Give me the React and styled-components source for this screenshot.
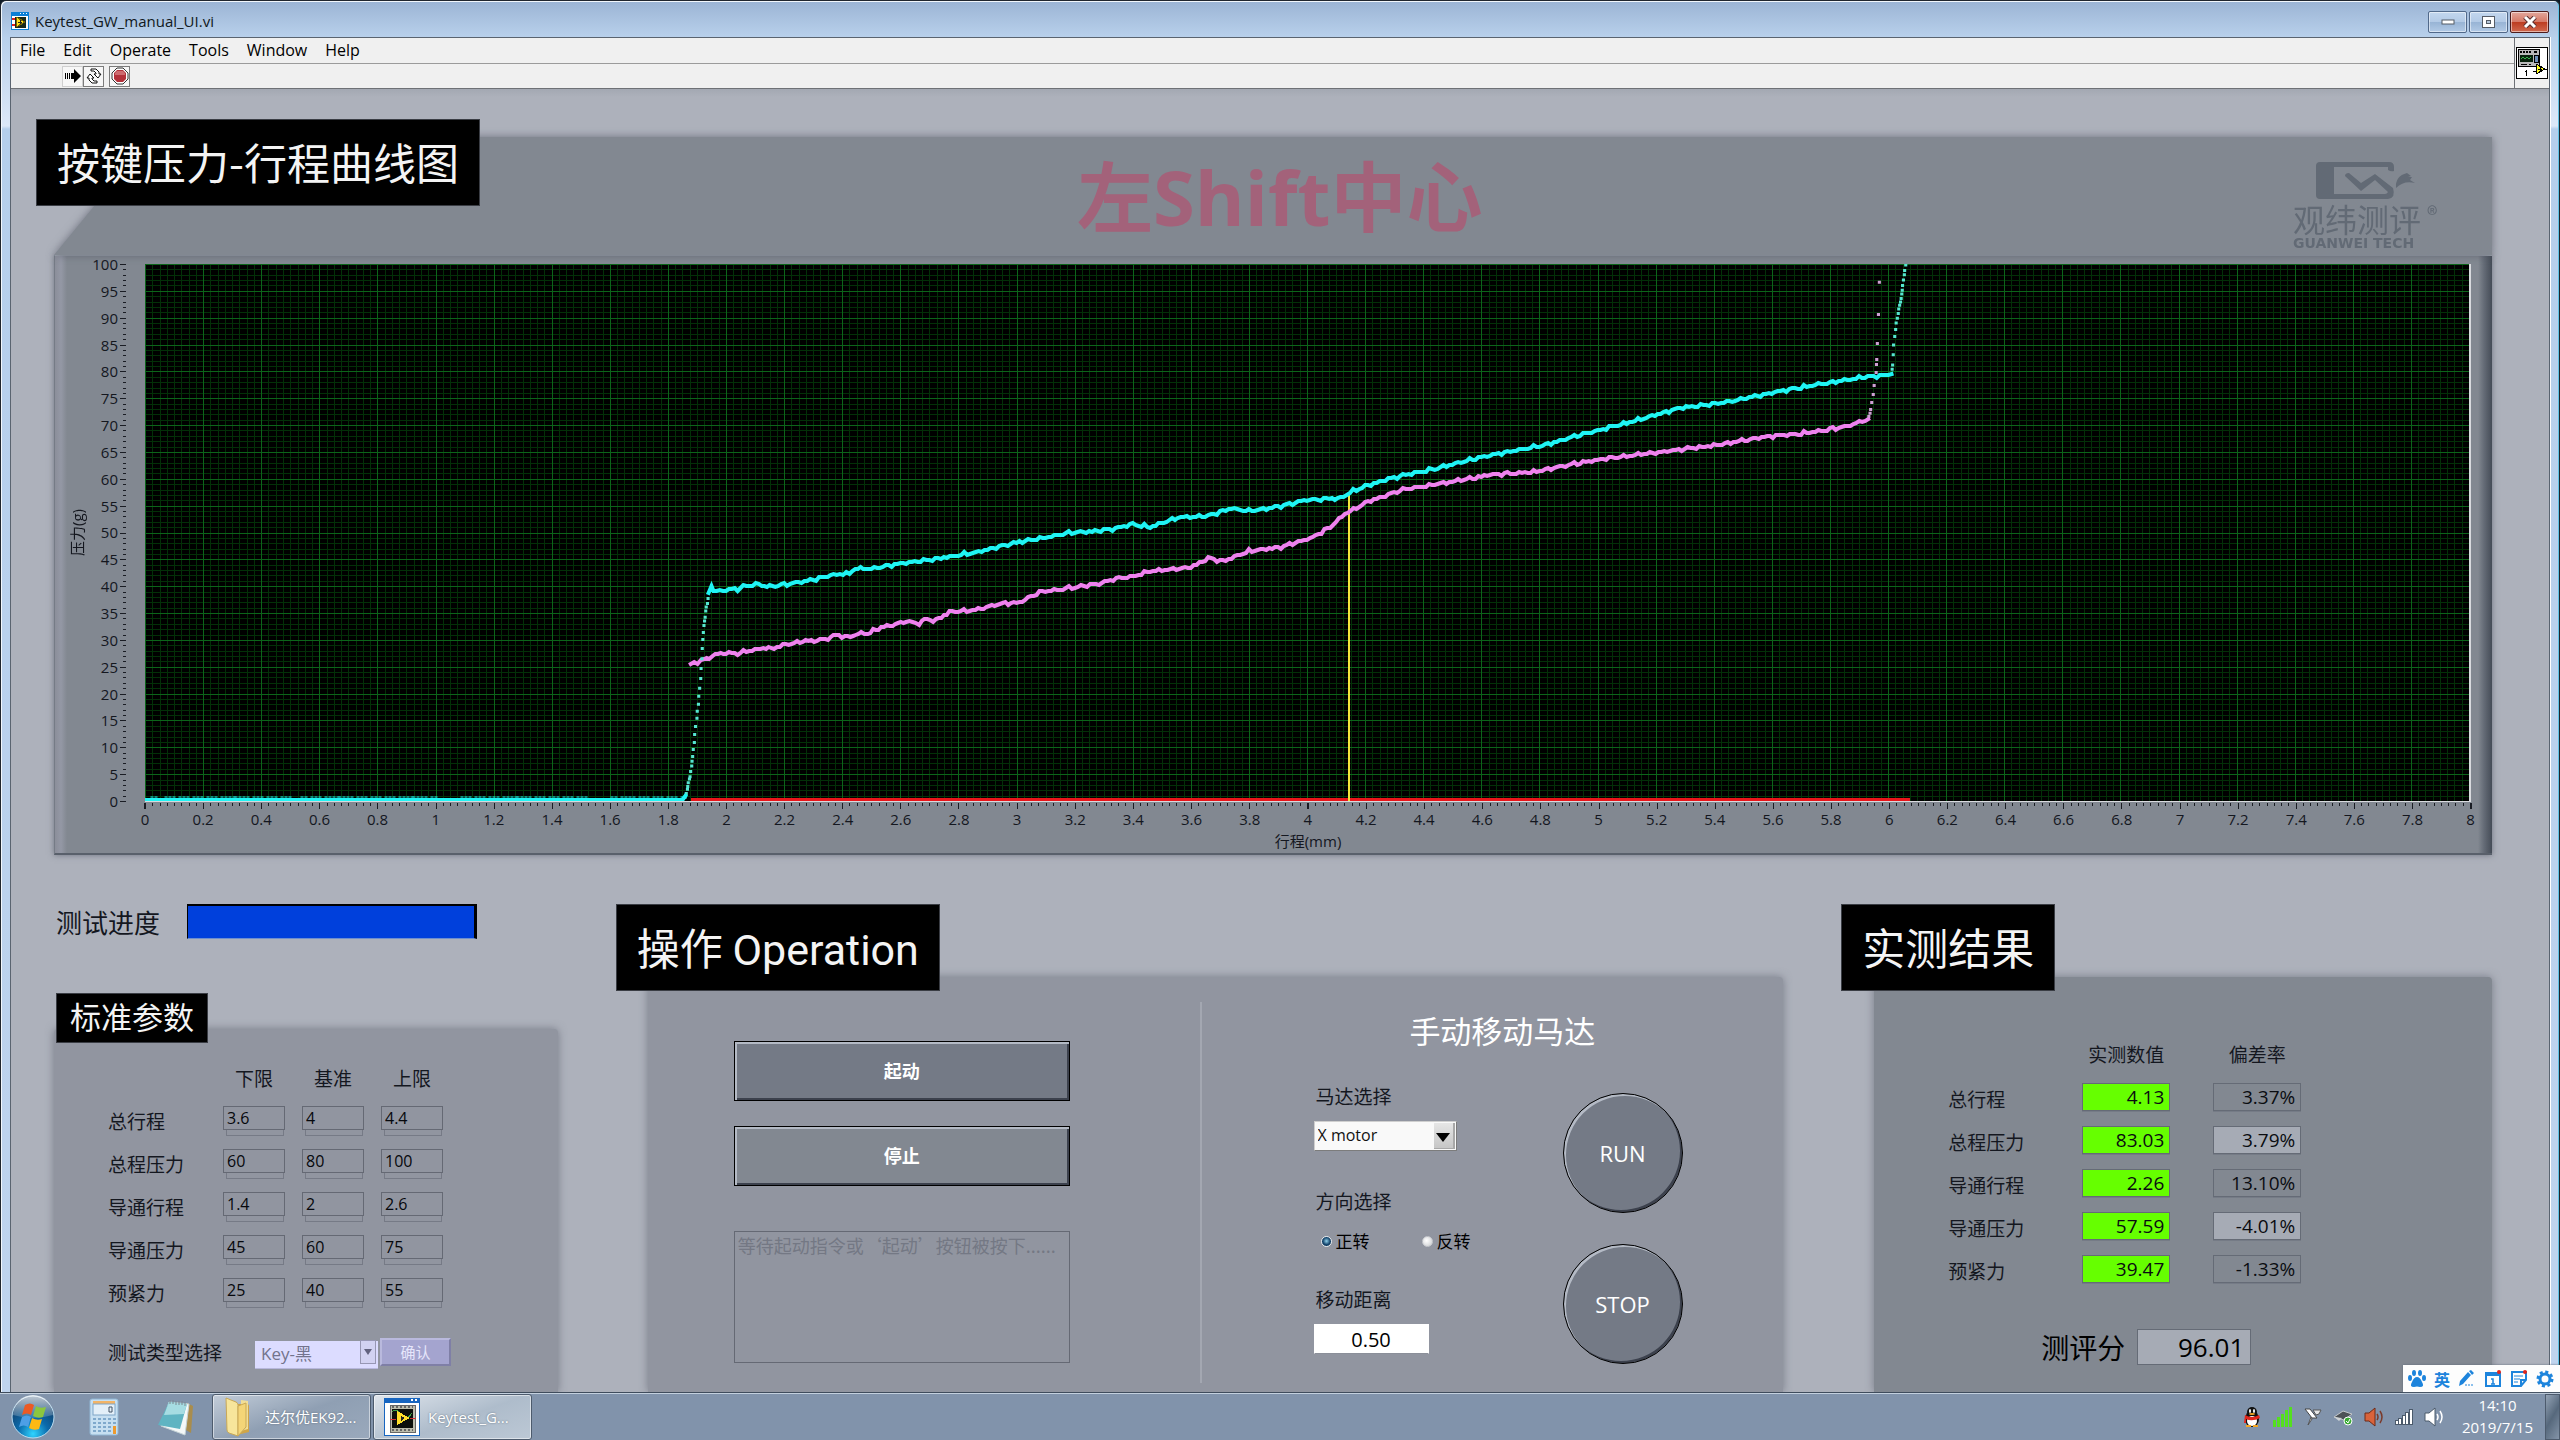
import React, { memo, useState } from 'react'
import styled, { createGlobalStyle, css } from 'styled-components'

const UI_FONT = `'Open Sans', 'Noto Sans CJK SC', sans-serif`
const CJK_FONT = `'Noto Sans CJK SC', 'Open Sans', sans-serif`

const PLOT_W = 2324
const PLOT_H = 537
const X_MAX = 8
const Y_MAX = 100

const range = n => Array.from({ length: n }, (_, i) => i)
const px = mm => Math.round((mm / X_MAX) * PLOT_W * 10) / 10
const py = g => Math.round((PLOT_H - (g / Y_MAX) * PLOT_H) * 10) / 10

// Press stroke, [mm, g]
const pressLine = [
	[1.94, 38.7], [1.95, 40.3], [1.957, 39], [2.0, 39.3], [2.04, 39.5], [2.08, 40.2], [2.114, 40.4],
	[2.15, 39.9], [2.21, 40.4], [2.3, 41.2], [2.37, 42.2], [2.425, 42.4], [2.445, 43.3], [2.5, 43.3],
	[2.61, 44.3], [2.7, 44.9], [2.85, 46.2], [2.98, 47.9], [3.18, 49.9], [3.32, 50.5], [3.4, 51.6],
	[3.46, 51], [3.555, 52.8], [3.66, 53.1], [3.74, 54.5], [3.8, 54], [3.91, 54.9], [3.99, 56],
	[4.115, 56.4], [4.17, 58], [4.27, 59.9], [4.44, 61.9], [4.61, 64.2], [4.81, 66.2], [4.95, 68.3],
	[5.12, 70.7], [5.285, 73.2], [5.425, 74.1], [5.59, 75.9], [5.76, 77.6], [5.9, 78.8], [6.012, 79.5],
]

const pressDots = [
	[1.859, 0.7], [1.863, 1.4], [1.867, 2.2], [1.868, 2.7], [1.87, 3.4], [1.874, 4.1], [1.876, 4.5],
	[1.878, 5.5], [1.882, 6.5], [1.883, 7.4], [1.885, 8.3], [1.887, 9.6], [1.891, 10.9], [1.892, 12.4],
	[1.895, 13.9], [1.9, 15.4], [1.901, 16.7], [1.905, 18], [1.906, 19.5], [1.909, 21], [1.913, 22.8],
	[1.914, 24.7], [1.917, 26.5], [1.918, 28.4], [1.92, 30.1], [1.922, 31.4], [1.924, 32.7],
	[1.926, 33.5], [1.928, 34.2], [1.93, 35.4], [1.932, 36.1], [1.936, 36.8], [1.938, 37.7],
	[6.014, 80.4], [6.016, 81.2], [6.018, 83.1], [6.019, 84.9], [6.023, 86.5], [6.026, 87.8],
	[6.028, 89], [6.032, 89.9], [6.035, 90.8], [6.037, 91.6], [6.04, 92.3], [6.043, 92.9],
	[6.045, 93.6], [6.047, 94.4], [6.049, 95.1], [6.05, 96], [6.053, 97], [6.056, 98], [6.057, 98.8],
	[6.061, 99.8],
]

// Return stroke
const releaseLine = [
	[1.879, 25.5], [1.902, 25.8], [1.925, 26.4], [1.942, 26.5], [1.954, 27.2], [2.0, 27.6],
	[2.03, 27.4], [2.09, 28.1], [2.138, 28.6], [2.155, 28.3], [2.206, 29.2], [2.264, 29.7],
	[2.333, 30], [2.379, 30.9], [2.419, 30.5], [2.465, 31.3], [2.488, 31.2], [2.534, 32.3],
	[2.574, 32.8], [2.62, 33.5], [2.665, 33.1], [2.683, 33.8], [2.723, 33.7], [2.769, 35.2],
	[2.849, 35.5], [2.906, 36.2], [2.952, 36.8], [3.01, 37], [3.079, 38.9], [3.17, 39.6],
	[3.274, 40.4], [3.343, 41.4], [3.4, 41.8], [3.46, 42.8], [3.6, 43.5], [3.66, 45.2], [3.71, 44.7],
	[3.8, 46.5], [3.91, 47.3], [4.02, 49.1], [4.08, 51], [4.13, 53.4], [4.21, 55.8], [4.33, 58],
	[4.5, 59.5], [4.64, 60.8], [4.78, 61.3], [4.92, 62.8], [5.06, 64], [5.23, 65.1], [5.4, 66.2],
	[5.565, 67.7], [5.73, 68.6], [5.85, 69.7], [5.932, 71.1],
]

const releaseDots = [
	[5.934, 71.6], [5.938, 72.2], [5.94, 72.9], [5.944, 74.2], [5.949, 75.7], [5.952, 77.4],
	[5.959, 79.8], [5.96, 81.3], [5.961, 82.2], [5.963, 85.2], [5.967, 90.6], [5.97, 96.6],
]

// sensor jitter, repeatable between renders
const jitter = x => 0.17 * Math.sin(x * 141) + 0.13 * Math.sin(x * 263 + 1.3) + 0.08 * Math.sin(x * 437)

const linePath = points => {
	const out = []
	points.slice(1).forEach(([x1, y1], i) => {
		const [x0, y0] = points[i]
		const steps = Math.max(1, Math.round((x1 - x0) / 0.01))
		range(steps).forEach(s => {
			const x = x0 + ((x1 - x0) * s) / steps
			const y = y0 + ((y1 - y0) * s) / steps + jitter(x)
			out.push(`${px(x)},${Math.round(py(y))}`)
		})
	})
	const [lx, ly] = points[points.length - 1]
	out.push(`${px(lx)},${py(ly)}`)
	return `M${out.join('L')}`
}

const dotPath = points => points.map(([x, y]) => `M${px(x)},${py(y)}h.1`).join('')

const idlePath = `M0,${PLOT_H - 1}H${px(1.85)}L${px(1.86)},${PLOT_H - 5}`
const idleBumps = range(270)
	.filter(i => Math.sin(i * 12.9898) * Math.sin(i * 3.1) > 0.1)
	.map(i => `M${i * 2},${PLOT_H - 4}h2`)
	.join('')

const gridX = major =>
	range(321)
		.filter(i => (i % 8 === 0) === major)
		.map(i => `M${Math.round((i * PLOT_W) / 320)},0V${PLOT_H}`)
		.join('')
const gridY = major =>
	range(101)
		.filter(i => (i % 5 === 0) === major)
		.map(i => `M0,${Math.round((i * PLOT_H) / 100)}H${PLOT_W}`)
		.join('')

const yTicks = range(101)
	.map(i => `M${i % 5 === 0 ? 0 : 3},${Math.round((i * PLOT_H) / 100)}H6`)
	.join('')
const xTicks = range(321)
	.map(i => `M${Math.round((i * PLOT_W) / 320)},0V${i % 8 === 0 ? 6 : 3}`)
	.join('')

const xLabels = range(41).map(i => String(Math.round(i * 2) / 10))
const yLabels = range(21).map(i => String(100 - i * 5))

const menus = ['File', 'Edit', 'Operate', 'Tools', 'Window', 'Help']

const limits = [
	{ name: '总行程', values: ['3.6', '4', '4.4'] },
	{ name: '总程压力', values: ['60', '80', '100'] },
	{ name: '导通行程', values: ['1.4', '2', '2.6'] },
	{ name: '导通压力', values: ['45', '60', '75'] },
	{ name: '预紧力', values: ['25', '40', '55'] },
]
const limitColumns = ['下限', '基准', '上限']

const results = [
	{ name: '总行程', value: '4.13', rate: '3.37%' },
	{ name: '总程压力', value: '83.03', rate: '3.79%', light: true },
	{ name: '导通行程', value: '2.26', rate: '13.10%' },
	{ name: '导通压力', value: '57.59', rate: '-4.01%', light: true },
	{ name: '预紧力', value: '39.47', rate: '-1.33%' },
]

//
const AppIcon = memo(() => (
	<svg width="18" height="18" viewBox="0 0 18 18" shapeRendering="crispEdges">
		<rect width="18" height="18" fill="#0b7fd6" />
		<rect x="1" y="4" width="16" height="13" fill="#fff" />
		<rect x="4" y="5" width="11" height="11" fill="#1b2a1b" />
		<path d="M1 7h3M1 13h3" stroke="#d22" strokeWidth="2" />
		<path d="M5 5v10l9-5z" fill="#ffe21a" stroke="#7a6500" />
		<path d="M7 10h4M9 8v4" stroke="#222" />
		<path d="M9 1h1M12 1h1M15 1h1" stroke="#fff" />
	</svg>
))

const RunIcon = memo(() => (
	<svg width="18" height="16" viewBox="0 0 18 16">
		<path d="M7 5h3V1l7 7-7 7v-4H7z" fill="#000" />
		<path d="M1 5v6M3 5v6M5 5v6" stroke="#000" strokeWidth="1" shapeRendering="crispEdges" />
	</svg>
))

const LoopIcon = memo(() => (
	<svg width="18" height="18" viewBox="0 0 18 18" fill="#fff" stroke="#111" strokeWidth="1">
		<path d="M6 2h5l3 3v2h2l-3 4-4-4h2V6L9 4H6z" />
		<path d="M12 16H7l-3-3v-2H2l3-4 4 4H7v1l2 2h3z" />
	</svg>
))

const AbortIcon = memo(() => (
	<svg width="18" height="18" viewBox="0 0 18 18">
		<path d="M6 1h6l5 5v6l-5 5H6l-5-5V6z" fill="#fff" stroke="#333" />
		<path d="M6 3h6l3 3v6l-3 3H6l-3-3V6z" fill="#b3303a" />
		<path d="M6 4h6l2 2v2H4V6z" fill="#cd6a6f" />
	</svg>
))

const ConnectorIcon = memo(() => (
	<svg width="32" height="32" viewBox="0 0 32 32" shapeRendering="crispEdges">
		<rect x="0.5" y="0.5" width="31" height="31" fill="#fff" stroke="#000" />
		<rect x="2" y="2" width="22" height="18" fill="#000" />
		<rect x="3" y="3" width="20" height="16" fill="#b9b9b9" />
		<path d="M4 5h2M7 5h2M10 5h2M13 5h2M18 5h3" stroke="#000" strokeWidth="2" />
		<rect x="4" y="8" width="13" height="7" fill="#06210a" />
		<path d="M5 12l2-2 2 2 2-2 2 2 2-2" stroke="#35b04a" fill="none" />
		<rect x="18" y="8" width="4" height="7" fill="#6d8fb8" stroke="#000" />
		<path d="M5 17h6M13 17h2" stroke="#000" />
		<path d="M10 23v6M9 24h1" stroke="#000" />
		<path d="M20 17v10l9-5z" fill="#ffff1f" stroke="#000" />
		<path d="M17 24h3M29 22h2M22 22h4M24 20v4" stroke="#000" />
	</svg>
))

const BrandMark = memo(() => (
	<svg width="100" height="38" viewBox="0 0 100 38" fill="#626a75">
		<path d="M5 1h69q5 0 5 5v4q-3 1-6-1V6H19v27h51q2 0 3-2L60 19 46 30 30 15q0-3 4-3l12 10 14-9 18 14q3 10-5 11H5q-4 0-4-4V5q0-4 4-4z" />
		<path d="M81 27q-1-12 11-15l4 3-3 1 4 0-2 3 5 3q-11-3-19 5z" />
	</svg>
))

const StartOrb = memo(() => (
	<svg width="44" height="44" viewBox="0 0 44 44">
		<defs>
			<radialGradient id="orb" cx="50%" cy="90%" r="80%">
				<stop offset="0" stopColor="#2fd4ff" />
				<stop offset="0.45" stopColor="#0b6bac" />
				<stop offset="1" stopColor="#123a63" />
			</radialGradient>
			<linearGradient id="gloss" x1="0" y1="0" x2="0" y2="1">
				<stop offset="0" stopColor="#fff" stopOpacity="0.75" />
				<stop offset="1" stopColor="#fff" stopOpacity="0.15" />
			</linearGradient>
		</defs>
		<circle cx="22" cy="22" r="21" fill="url(#orb)" stroke="#b9dcf0" />
		<path d="M2 20A20 20 0 0 1 42 20Q22 26 2 20z" fill="url(#gloss)" />
		<path d="M14 10q5-3 9 0l-3 10q-4-3-9 0z" fill="#ec5a24" />
		<path d="M25 11q4 3 10 1l-3 10q-5 2-10-1z" fill="#8cc63e" />
		<path d="M11 22q5-3 9 0l-3 10q-4-3-9 0z" fill="#4d9fe6" />
		<path d="M21 23q5 3 10 1l-3 10q-5 2-10-1z" fill="#fdb913" />
	</svg>
))

const CalculatorIcon = memo(() => (
	<svg width="30" height="38" viewBox="0 0 30 38">
		<rect x="1" y="1" width="28" height="36" rx="2" fill="#c6dff1" stroke="#8fb4d2" />
		<rect x="4" y="3" width="22" height="3" fill="#f2b467" />
		<rect x="4" y="6" width="22" height="11" fill="#e3eff8" stroke="#7fa6c8" />
		<path d="M20 9h3v5h-3z" fill="none" stroke="#456" />
		{range(4).map(r =>
			range(5).map(c => (
				<rect
					key={`${r}-${c}`}
					x={4 + c * 5}
					y={20 + r * 4}
					width="3"
					height={c === 4 && r > 1 ? 4 : 2}
					fill={c === 4 && r > 1 ? '#ee9a2e' : '#7fa9cc'}
				/>
			))
		)}
	</svg>
))

const NotepadIcon = memo(() => (
	<svg width="40" height="38" viewBox="0 0 40 38">
		<path d="M31 5l6 3-2 27-5-3z" fill="#a98d4d" />
		<path d="M13 4l20 2-4 31-24-9z" fill="#f4f8f8" stroke="#c5d2d6" />
		<path d="M13 4l18 2-7 25L2 27z" fill="#5fb4c2" />
		<path d="M13 4l18 2-3 10L8 17z" fill="#a6dce2" />
		<path d="M14 2v4M17 2v4M20 3v4M23 3v4M26 3v4M29 4v4" stroke="#7b8790" />
	</svg>
))

const FolderIcon = memo(() => (
	<svg width="32" height="42" viewBox="0 0 32 42">
		<path d="M14 8l10 0q2 0 2 2v26l-12 3z" fill="#cfa548" />
		<path d="M18 4l7 1v28l-7 2z" fill="#f2de96" />
		<path d="M3 2l10 4q2 1 2 3v31l-9-3q-2-1-2-3z" fill="#f7e59b" stroke="#c9a856" />
		<path d="M15 10l8-3v24l-8 9z" fill="#f4d577" stroke="#c9a856" />
	</svg>
))

const LabviewIcon = memo(() => (
	<svg width="36" height="38" viewBox="0 0 36 38" shapeRendering="crispEdges">
		<rect width="36" height="38" fill="#1765c0" />
		<rect x="1" y="5" width="34" height="32" fill="#fff" />
		<path d="M27 2h2M31 2h2" stroke="#fff" strokeWidth="2" />
		<rect x="6" y="7" width="25" height="27" fill="#bcbcac" stroke="#666" />
		<path d="M8 9h21M8 32h21" stroke="#666" strokeWidth="2" strokeDasharray="2 2" />
		<rect x="8" y="11" width="21" height="19" fill="#0c0f0c" />
		<path d="M8 14q5-5 9 3t11-2" stroke="#3ea447" fill="none" />
		<path d="M6 21h6M26 20h6" stroke="#c33" />
		<path d="M13 13v14l13-7z" fill="#ffdf2b" />
		<path d="M17 18v5l4-3z" fill="#222" />
	</svg>
))

const PenguinIcon = memo(() => (
	<svg width="20" height="22" viewBox="0 0 20 22">
		<ellipse cx="10" cy="13" rx="7" ry="8" fill="#111" />
		<ellipse cx="10" cy="6" rx="5" ry="5" fill="#111" />
		<ellipse cx="10" cy="15" rx="5" ry="5" fill="#fff" />
		<ellipse cx="8" cy="5" rx="1" ry="2" fill="#fff" />
		<ellipse cx="12" cy="5" rx="1" ry="2" fill="#fff" />
		<ellipse cx="10" cy="8" rx="3" ry="1" fill="#f5a623" />
		<path d="M3 9q7 4 14 0l1 3q-8 4-14 1v4H2z" fill="#e1251b" />
		<path d="M4 20h5M11 20h5" stroke="#f5a623" strokeWidth="2" />
	</svg>
))

const GreenBarsIcon = memo(() => (
	<svg width="20" height="20" viewBox="0 0 20 20" fill="#54e01e">
		<path d="M0 13h3v7H0zM4 10h3v10H4zM8 7h3v13H8zM12 3h3v17h-3zM16 0h3v20h-3z" />
	</svg>
))

const NIcon = memo(() => (
	<svg width="18" height="18" viewBox="0 0 18 18">
		<path d="M1 1l5 0 7 9-5 0z" fill="#fff" stroke="#444" />
		<path d="M9 2h8l-2 4-3 1zM7 9l-3 8 4-6z" fill="#e6e6e6" stroke="#555" />
	</svg>
))

const UsbIcon = memo(() => (
	<svg width="20" height="18" viewBox="0 0 20 18">
		<path d="M1 9l9-6 9 3-8 6z" fill="#4d5257" stroke="#c4c8cc" />
		<path d="M1 9l5 4 3-3" fill="#cfd3d6" />
		<circle cx="15" cy="13" r="4" fill="#3aaa35" stroke="#fff" />
		<path d="M13 13l2 2 2-4" stroke="#fff" fill="none" />
	</svg>
))

const SpeakerIcon = memo(({ body, edge, wave }) => (
	<svg width="20" height="20" viewBox="0 0 20 20">
		<path d="M1 6h4l6-5v18l-6-5H1z" fill={body} stroke={edge} />
		<path d="M13 7q2 3 0 6M16 4q4 6 0 12" stroke={wave} strokeWidth="1.5" fill="none" />
	</svg>
))

const NetworkIcon = memo(() => (
	<svg width="18" height="16" viewBox="0 0 18 16" shapeRendering="crispEdges">
		<path d="M0 11h4v5H0zM3 9h4v7H3zM7 6h4v10H7zM10 3h4v13h-4zM14 0h4v16h-4z" fill="#4b5a6b" />
		<path d="M1 12h2v3H1zM4 10h2v5H4zM8 7h2v8H8zM11 4h2v11h-2zM15 1h2v14h-2z" fill="#fff" />
	</svg>
))

const PawIcon = memo(() => (
	<svg width="18" height="18" viewBox="0 0 18 18" fill="#1d84dc">
		<ellipse cx="2" cy="8" rx="2" ry="3" />
		<ellipse cx="6" cy="3" rx="2" ry="3" />
		<ellipse cx="12" cy="3" rx="2" ry="3" />
		<ellipse cx="16" cy="8" rx="2" ry="3" />
		<path d="M9 7q3 0 5 5 3 5-2 5-3-1-6 0-5 0-2-5 2-5 5-5z" />
	</svg>
))

const PencilIcon = memo(() => (
	<svg width="18" height="18" viewBox="0 0 18 18" fill="#1d84dc">
		<path d="M10 2l3 3-8 9-4 2 1-5zM11 1l2-1 3 3-2 2z" />
		<path d="M7 15h2M10 15h2M13 15h2" stroke="#1d84dc" />
	</svg>
))

const CalendarIcon = memo(() => (
	<svg width="18" height="18" viewBox="0 0 18 18">
		<path d="M2 3h14v13H2zM2 5h14" fill="none" stroke="#1d84dc" strokeWidth="2" />
		<path d="M7 9h2v5M7 14h4" stroke="#1d84dc" strokeWidth="1.5" fill="none" />
		<circle cx="15" cy="2" r="2" fill="#e1251b" />
	</svg>
))

const NoteIcon = memo(() => (
	<svg width="18" height="18" viewBox="0 0 18 18">
		<path d="M2 2h14v8l-5 6H2zM16 10h-5v6" fill="none" stroke="#1d84dc" strokeWidth="2" />
		<path d="M4 6h9M4 9h6M4 12h4" stroke="#1d84dc" />
		<circle cx="15" cy="2" r="2" fill="#e1251b" />
	</svg>
))

const GearIcon = memo(() => (
	<svg width="18" height="18" viewBox="0 0 18 18">
		<circle cx="9" cy="9" r="5" fill="none" stroke="#1d84dc" strokeWidth="3" />
		<circle cx="9" cy="9" r="7" fill="none" stroke="#1d84dc" strokeWidth="3" strokeDasharray="3 2.5" />
	</svg>
))

//
const TitleBar = memo(() => (
	<TitleBarWrapper>
		<AppIcon />
		<WindowTitle>Keytest_GW_manual_UI.vi</WindowTitle>
		<CaptionButton aria-label="Minimize">
			<svg width="14" height="6">
				<rect x="1" y="1" width="12" height="4" fill="#fff" stroke="#555c66" />
			</svg>
		</CaptionButton>
		<CaptionButton aria-label="Restore">
			<svg width="13" height="12">
				<rect x="0.5" y="0.5" width="12" height="11" fill="#fff" stroke="#555c66" />
				<rect x="4.5" y="4.5" width="4" height="3" fill="#b8c8da" stroke="#555c66" />
			</svg>
		</CaptionButton>
		<CaptionButton $close aria-label="Close">
			<svg width="14" height="12" viewBox="0 0 14 12">
				<path d="M2 1l10 10M12 1L2 11" stroke="#5b3030" strokeWidth="5" />
				<path d="M2 1l10 10M12 1L2 11" stroke="#fff" strokeWidth="3" />
			</svg>
		</CaptionButton>
	</TitleBarWrapper>
))

const Bars = memo(() => (
	<BarsWrapper>
		<BarsLeft>
			<MenuBar>
				{menus.map(m => (
					<MenuItem key={m}>{m}</MenuItem>
				))}
			</MenuBar>
			<ToolBar>
				<ToolButton $flat aria-label="Run">
					<RunIcon />
				</ToolButton>
				<ToolButton aria-label="Run continuously">
					<LoopIcon />
				</ToolButton>
				<ToolButton $spaced aria-label="Abort">
					<AbortIcon />
				</ToolButton>
			</ToolBar>
		</BarsLeft>
		<ConnectorPane>
			<ConnectorIcon />
		</ConnectorPane>
	</BarsWrapper>
))

const Chart = memo(() => (
	<ChartSection>
		<BlackTitle $outdent>按键压力-行程曲线图</BlackTitle>
		<ChartShadow>
			<ChartHeader>
				<KeyName>左Shift中心</KeyName>
				<Brand>
					<BrandMark />
					<BrandName>
						观纬测评<sup>®</sup>
					</BrandName>
					<BrandLatin>GUANWEI TECH</BrandLatin>
				</Brand>
			</ChartHeader>
		</ChartShadow>
		<ChartBody>
			<AxisTitleY>压力(g)</AxisTitleY>
			<AxisY>
				{yLabels.map(l => (
					<li key={l}>{l}</li>
				))}
			</AxisY>
			<TicksY viewBox={`0 0 6 ${PLOT_H}`} preserveAspectRatio="none">
				<path d={yTicks} stroke="#1a1d24" />
			</TicksY>
			<PlotColumn>
				<Plot viewBox={`0 0 ${PLOT_W} ${PLOT_H}`} preserveAspectRatio="none">
					<g fill="none" shapeRendering="crispEdges">
						<path d={gridX(false) + gridY(false)} stroke="#033008" />
						<path d={gridX(true) + gridY(true)} stroke="#0c641a" />
						<path d={`M${px(1.88)},${PLOT_H - 1}H${px(6.075)}`} stroke="#e8151a" strokeWidth="4" />
						<path d={`M${px(4.143)},${py(57.5)}V${PLOT_H}`} stroke="#f4e63a" strokeWidth="2" />
					</g>
					<g fill="none" strokeLinecap="square">
						<path d={linePath(releaseLine)} stroke="#ee82ee" strokeWidth="4" />
						<path d={dotPath(releaseDots)} stroke="#cf9fd4" strokeWidth="3" />
						<path d={linePath(pressLine)} stroke="#1ff4f4" strokeWidth="4" />
						<path d={dotPath(pressDots)} stroke="#55e6d0" strokeWidth="3" />
						<path d={idlePath} stroke="#1ff4f4" strokeWidth="4" />
						<path d={idleBumps} stroke="#1ff4f4" strokeWidth="1" />
					</g>
				</Plot>
				<TicksX viewBox={`0 0 ${PLOT_W} 6`} preserveAspectRatio="none">
					<path d={xTicks} stroke="#1a1d24" shapeRendering="crispEdges" />
				</TicksX>
				<AxisX>
					{xLabels.map(l => (
						<li key={l}>{l}</li>
					))}
				</AxisX>
				<AxisTitleX>行程(mm)</AxisTitleX>
			</PlotColumn>
		</ChartBody>
	</ChartSection>
))

const LimitsColumn = memo(() => (
	<Column>
		<ProgressRow>
			<label htmlFor="progress">测试进度</label>
			<Progress id="progress" value="100" max="100" />
		</ProgressRow>
		<BlackTitle $small>标准参数</BlackTitle>
		<LimitsPanel>
			<LimitsTable>
				<thead>
					<tr>
						<th aria-label="参数" />
						{limitColumns.map(c => (
							<th key={c} scope="col">
								{c}
							</th>
						))}
					</tr>
				</thead>
				<tbody>
					{limits.map(row => (
						<tr key={row.name}>
							<th scope="row">{row.name}</th>
							{row.values.map((v, i) => (
								<td key={limitColumns[i]}>
									<LimitField>
										<input aria-label={`${row.name} ${limitColumns[i]}`} defaultValue={v} />
									</LimitField>
								</td>
							))}
						</tr>
					))}
				</tbody>
			</LimitsTable>
			<TypeRow>
				<label htmlFor="testType">测试类型选择</label>
				<TypeSelect>
					<select id="testType" defaultValue="black">
						<option value="black">Key-黑</option>
					</select>
					<i />
				</TypeSelect>
				<ConfirmButton>确认</ConfirmButton>
			</TypeRow>
		</LimitsPanel>
	</Column>
))

const MotorControls = () => {
	const [direction, setDirection] = useState('forward')

	return (
		<Motor>
			<MotorTitle>手动移动马达</MotorTitle>
			<MotorBody>
				<MotorFields>
					<FieldLabel htmlFor="motor">马达选择</FieldLabel>
					<MotorSelect>
						<select id="motor" defaultValue="x">
							<option value="x">X motor</option>
						</select>
						<span />
					</MotorSelect>
					<Directions>
						<legend>方向选择</legend>
						<RadioLabel>
							<input
								type="radio"
								name="direction"
								checked={direction === 'forward'}
								onChange={() => setDirection('forward')}
							/>
							正转
						</RadioLabel>
						<RadioLabel>
							<input
								type="radio"
								name="direction"
								checked={direction === 'reverse'}
								onChange={() => setDirection('reverse')}
							/>
							反转
						</RadioLabel>
					</Directions>
					<FieldLabel htmlFor="distance">移动距离</FieldLabel>
					<DistanceInput id="distance" defaultValue="0.50" />
				</MotorFields>
				<RoundButtons>
					<RoundButton>RUN</RoundButton>
					<RoundButton>STOP</RoundButton>
				</RoundButtons>
			</MotorBody>
		</Motor>
	)
}

const OperationColumn = memo(() => (
	<Column>
		<BlackTitle>
			操作 <span>Operation</span>
		</BlackTitle>
		<OperationPanel>
			<Commands>
				<CommandButton $dark>起动</CommandButton>
				<CommandButton>停止</CommandButton>
				<StatusText
					readOnly
					aria-label="状态"
					value="等待起动指令或‘起动’按钮被按下......"
				/>
			</Commands>
			<Divider />
			<MotorControls />
		</OperationPanel>
	</Column>
))

const ResultsColumn = memo(() => (
	<Column>
		<BlackTitle>实测结果</BlackTitle>
		<ResultsPanel>
			<ResultsTable>
				<thead>
					<tr>
						<th aria-label="参数" />
						<th scope="col">实测数值</th>
						<th scope="col">偏差率</th>
					</tr>
				</thead>
				<tbody>
					{results.map(r => (
						<tr key={r.name}>
							<th scope="row">{r.name}</th>
							<td>
								<ResultValue $tone="good">{r.value}</ResultValue>
							</td>
							<td>
								<ResultValue $tone={r.light ? 'light' : 'plain'}>{r.rate}</ResultValue>
							</td>
						</tr>
					))}
				</tbody>
			</ResultsTable>
			<ScoreRow>
				<span>测评分</span>
				<Score>96.01</Score>
			</ScoreRow>
		</ResultsPanel>
	</Column>
))

const Taskbar = memo(() => (
	<TaskbarWrapper>
		<ImeBar>
			<PawIcon />
			<b>英</b>
			<PencilIcon />
			<CalendarIcon />
			<NoteIcon />
			<GearIcon />
		</ImeBar>
		<LaunchButton aria-label="Start" $width={66}>
			<StartOrb />
		</LaunchButton>
		<LaunchButton aria-label="Calculator" $width={76}>
			<CalculatorIcon />
		</LaunchButton>
		<LaunchButton aria-label="Notepad" $width={68}>
			<NotepadIcon />
		</LaunchButton>
		<TaskButton>
			<FolderIcon />
			达尔优EK92...
		</TaskButton>
		<TaskButton $active>
			<LabviewIcon />
			Keytest_G...
		</TaskButton>
		<Tray>
			<PenguinIcon />
			<GreenBarsIcon />
			<NIcon />
			<UsbIcon />
			<SpeakerIcon body="#d9633b" edge="#6f2a16" wave="#7b3a2a" />
			<NetworkIcon />
			<SpeakerIcon body="#fff" edge="#4b5a6b" wave="#fff" />
		</Tray>
		<Clock>
			<time>14:10</time>
			<time>2019/7/15</time>
		</Clock>
		<ShowDesktop aria-label="Show desktop" />
	</TaskbarWrapper>
))

//
const App = () => (
	<Desktop>
		<GlobalStyle />
		<Window>
			<TitleBar />
			<Frame>
				<Bars />
				<Main>
					<Chart />
					<Columns>
						<LimitsColumn />
						<OperationColumn />
						<ResultsColumn />
					</Columns>
				</Main>
			</Frame>
		</Window>
		<Taskbar />
	</Desktop>
)

export default App

const GlobalStyle = createGlobalStyle`
	* {
		box-sizing: border-box;
	}

	body {
		margin: 0;
		font-family: ${UI_FONT};
		font-size: 16px;
		color: #14171f;
		background: #0d1a26;
	}

	button, input, select, textarea {
		font: inherit;
		color: inherit;
		margin: 0;
	}

	svg {
		display: block;
		flex: none;
	}
`

const Desktop = styled.div`
	min-height: 100vh;
	display: flex;
	flex-direction: column;
`

const Window = styled.div`
	flex: 1;
	display: flex;
	flex-direction: column;
	border: 1px solid #20262e;
	border-bottom: 0;
	border-radius: 6px 6px 0 0;
	background: linear-gradient(#9bb4d4, #b9d1ec 37px, #dce8f8 125px, #b5cfec 128px, #bfd4ee);
	box-shadow: inset 1px 1px 0 #f2f7fc, inset -1px 0 0 #5fc3e6;
`

const TitleBarWrapper = styled.header`
	display: flex;
	align-items: center;
	gap: 2px;
	height: 36px;
	padding: 4px 10px 0;
`

const WindowTitle = styled.div`
	flex: 1;
	padding-left: 4px;
	font-size: 15px;
	line-height: 24px;
	color: #101820;
`

const CaptionButton = styled.button`
	width: 39px;
	height: 22px;
	display: flex;
	align-items: center;
	justify-content: center;
	align-self: flex-start;
	margin-top: 6px;
	padding: 0;
	border: 1px solid ${p => (p.$close ? '#4d1c1c' : '#51698a')};
	border-radius: 2px;
	box-shadow: inset 0 0 0 1px rgba(255, 255, 255, 0.5);
	background: ${p =>
		p.$close
			? 'linear-gradient(#e2a79c, #d67a68 48%, #bd3d22 52%, #d0694f)'
			: 'linear-gradient(#c3d7ee, #b3cae6 48%, #98b4d5 52%, #b2cae6)'};
`

const Frame = styled.div`
	flex: 1;
	display: flex;
	flex-direction: column;
	margin: 0 9px;
	border: 1px solid #5a6470;
	border-width: 1px 1px 0;
	box-shadow: 1px 0 0 #fff;
`

const BarsWrapper = styled.div`
	display: flex;
	background: #f0f0f0;
	border-bottom: 1px solid #6e7176;
`

const BarsLeft = styled.div`
	flex: 1;
`

const MenuBar = styled.nav`
	display: flex;
	gap: 18px;
	padding: 0 9px 1px;
	border-bottom: 1px solid #9b9b9b;
`

const MenuItem = styled.button`
	padding: 0;
	border: 0;
	background: none;
	font-size: 16px;
	line-height: 24px;
	color: #000;
`

const ToolBar = styled.div`
	display: flex;
	align-items: center;
	height: 24px;
	padding-left: 51px;
`

const ToolButton = styled.button`
	width: 21px;
	height: 21px;
	display: flex;
	align-items: center;
	justify-content: center;
	padding: 0;
	border: 1px solid ${p => (p.$flat ? '#cfcfcf' : '#7c7c7c')};
	background: #f7f7f7;
	margin-left: ${p => (p.$spaced ? '5px' : 0)};
`

const ConnectorPane = styled.div`
	display: flex;
	align-items: center;
	justify-content: center;
	width: 35px;
	border-left: 1px solid #6e7176;
`

const Main = styled.main`
	flex: 1;
	display: flex;
	flex-direction: column;
	padding: 30px 57px 0 43px;
	background: linear-gradient(#a3a8b2, #adb1bb 8px);
`

const BlackTitle = styled.h2`
	position: relative;
	z-index: 1;
	align-self: flex-start;
	height: 87px;
	margin: 0;
	padding: 0 20px;
	border: 1px solid #3a3d44;
	background: #000;
	color: #f4f4f4;
	font-family: ${CJK_FONT};
	font-weight: 400;
	font-size: 43px;
	line-height: 83px;
	white-space: nowrap;

	span {
		font-family: Roboto, sans-serif;
		font-size: 43px;
	}

	${p =>
		p.$outdent &&
		css`
			margin-left: -18px;
		`}

	${p =>
		p.$small &&
		css`
			height: 50px;
			margin-left: 2px;
			padding: 0 13px;
			font-size: 31px;
			line-height: 44px;
		`}
`

const ChartSection = styled.section`
	display: flex;
	flex-direction: column;
`

const ChartShadow = styled.div`
	margin-top: -69px;
	filter: drop-shadow(0 0 4px rgba(70, 74, 88, 0.6));
`

const ChartHeader = styled.div`
	display: flex;
	justify-content: space-between;
	height: 118px;
	padding: 18px 48px 0 1023px;
	background: #828891;
	clip-path: polygon(0 100%, 97px 0, 100% 0, 100% 100%);
`

const KeyName = styled.h1`
	margin: 0;
	font-size: 76px;
	font-weight: 700;
	line-height: 84px;
	color: #a3627a;
	white-space: nowrap;
`

const Brand = styled.div`
	width: 151px;
	display: flex;
	flex-direction: column;
	padding-top: 6px;
	color: #626a75;

	svg {
		margin-left: 22px;
	}
`

const BrandName = styled.div`
	display: flex;
	font-family: ${CJK_FONT};
	font-size: 32px;
	line-height: 38px;

	sup {
		margin-left: 6px;
		font-size: 22px;
		line-height: 28px;
	}
`

const BrandLatin = styled.div`
	font: bold 14px/12px 'DejaVu Sans', sans-serif;
	white-space: nowrap;
`

const ChartBody = styled.div`
	display: grid;
	grid-template-columns: 21px 32px 6px minmax(0, 1fr);
	padding: 8px 21px 0 12px;
	background: linear-gradient(90deg, #8b8e9a, #9498a5 6px, #828891 12px, #828891 calc(100% - 14px), #646b76 calc(100% - 8px), #454c57);
	border-top: 1px solid #9aa0aa;
	border-bottom: 2px solid #59606b;
	border-left: 1px solid #757b86;
	box-shadow: 0 0 6px rgba(70, 74, 88, 0.6);
`

const AxisTitleY = styled.div`
	display: flex;
	align-items: center;
	justify-content: center;
	height: 538px;
	writing-mode: vertical-rl;
	text-orientation: sideways;
	transform: rotate(180deg);
	font-size: 15px;
	line-height: 20px;
`

const AxisY = styled.ul`
	display: flex;
	flex-direction: column;
	justify-content: space-between;
	height: 537px;
	margin: 0;
	padding: 0 2px 0 0;
	list-style: none;
	text-align: right;
	font-size: 15px;
	line-height: 0;
`

const TicksY = styled.svg`
	width: 6px;
	height: 537px;
	overflow: visible;
	shape-rendering: crispEdges;
`

const PlotColumn = styled.div`
	padding-left: 19px;
`

const Plot = styled.svg`
	width: 100%;
	height: 538px;
	background: #000;
	border-right: 2px solid #d8dade;
	border-bottom: 1px solid #d8dade;
`

const TicksX = styled.svg`
	width: 100%;
	height: 6px;
	margin-top: 1px;
	overflow: visible;
`

const AxisX = styled.ul`
	display: flex;
	justify-content: space-between;
	margin: 0;
	padding: 0;
	list-style: none;
	font-size: 15px;
	line-height: 20px;

	li {
		width: 0;
		display: flex;
		justify-content: center;
	}
`

const AxisTitleX = styled.div`
	text-align: center;
	font-size: 15px;
	line-height: 24px;
`

const Columns = styled.div`
	flex: 1;
	display: grid;
	grid-template-columns: minmax(0, 504fr) minmax(0, 1168fr) minmax(0, 651fr);
	column-gap: 58px;
	margin-top: 49px;
`

const Column = styled.section`
	display: flex;
	flex-direction: column;
`

const panel = css`
	flex: 1;
	margin-top: -14px;
	border-radius: 4px 4px 0 0;
	background: #9195a0;
	box-shadow: 0 0 8px rgba(84, 88, 102, 0.6);
	clip-path: inset(-10px -10px 0);
`

const ProgressRow = styled.div`
	display: flex;
	align-items: center;
	gap: 27px;
	height: 35px;
	margin-bottom: 54px;
	padding-left: 2px;
	font-family: ${CJK_FONT};
	font-size: 26px;
	line-height: 35px;
`

const Progress = styled.progress`
	appearance: none;
	width: 290px;
	height: 35px;
	border: 1px solid #000;
	border-width: 2px 3px 1px 1px;
	border-bottom-color: #6d8fd0;

	&::-webkit-progress-bar {
		background: #000;
	}

	&::-webkit-progress-value {
		background: #0040dc;
	}
`

const LimitsPanel = styled.div`
	${panel}
	padding: 30px 0 26px 54px;
`

const rowHeading = css`
	padding: 5px 0 0;
	text-align: left;
`

const LimitsTable = styled.table`
	table-layout: fixed;
	width: 352px;
	border-collapse: collapse;
	font-family: ${CJK_FONT};
	font-size: 19px;
	line-height: 24px;

	tr {
		height: 43px;
	}

	thead tr {
		height: 38px;
	}

	th {
		padding: 0 17px 0 0;
		width: 79px;
		font-weight: 400;
	}

	th:first-child {
		width: 115px;
	}

	tbody th {
		${rowHeading}
	}

	td {
		padding: 0;
	}
`

const LimitField = styled.div`
	width: 62px;

	input {
		display: block;
		width: 62px;
		height: 24px;
		padding: 0 3px;
		border: 1px solid #656974;
		background: #9195a0;
		font-family: ${UI_FONT};
		font-size: 16px;
		line-height: 22px;
		color: #06080c;
	}

	&::after {
		content: '';
		display: block;
		height: 5px;
		margin: 0 1px -5px 3px;
		border: 1px solid #767a86;
		border-top: 0;
	}
`

const TypeRow = styled.div`
	display: flex;
	align-items: center;
	margin-top: 26px;
	font-family: ${CJK_FONT};
	font-size: 19px;
	line-height: 28px;

	label {
		width: 147px;
	}
`

const TypeSelect = styled.div`
	position: relative;
	width: 123px;
	height: 28px;

	select {
		appearance: none;
		width: 100%;
		height: 28px;
		padding: 0 6px;
		border: 0;
		border-bottom: 1px solid #b7b7dc;
		border-radius: 0;
		background: #dcdcff;
		color: #72738c;
		font-family: ${UI_FONT};
		font-size: 17px;
		line-height: 26px;
	}

	i {
		position: absolute;
		right: 2px;
		top: 2px;
		width: 16px;
		height: 24px;
		border: 1px solid #9797b4;
		background: #d2d2f2;
		pointer-events: none;
	}

	i::after {
		content: '';
		display: block;
		width: 0;
		margin: 8px auto 0;
		border: 4px solid transparent;
		border-top: 6px solid #62627f;
		border-bottom: 0;
	}
`

const ConfirmButton = styled.button`
	width: 71px;
	height: 28px;
	margin-left: 2px;
	padding: 0;
	border: 2px solid;
	border-color: #b9b9dd #7f7fa6 #7f7fa6 #b9b9dd;
	background: #a4a4cf;
	color: #e6e6fb;
	font-family: ${CJK_FONT};
	font-size: 15px;
	line-height: 24px;
`

const OperationPanel = styled.div`
	${panel}
	display: grid;
	grid-template-columns: minmax(0, 552fr) 2px minmax(0, 582fr);
	margin-left: 32px;
`

const Commands = styled.div`
	display: flex;
	flex-direction: column;
	align-items: flex-start;
	padding: 64px 0 0 86px;
`

const CommandButton = styled.button`
	width: 336px;
	height: 60px;
	margin-bottom: 25px;
	padding: 0 0 2px;
	border: 1px solid #000;
	background: ${p => (p.$dark ? '#747a86' : '#828891')};
	box-shadow: inset 2px 2px 0 #b4bac5, inset -2px -2px 0 #3c414d;
	color: #fff;
	font-family: ${CJK_FONT};
	font-size: 18px;
	font-weight: 700;
`

const StatusText = styled.textarea`
	display: block;
	width: 336px;
	height: 132px;
	margin-top: 20px;
	padding: 0 3px;
	resize: none;
	border: 1px solid #656974;
	background: transparent;
	color: #747884;
	font-family: ${CJK_FONT};
	font-size: 18px;
	line-height: 26px;
	white-space: nowrap;
	overflow: hidden;
`

const Divider = styled.div`
	margin: 25px 0 9px;
	background: #a3a7b1;
`

const Motor = styled.div`
	padding-top: 33px;
`

const MotorTitle = styled.h3`
	margin: 0 0 33px;
	padding-left: 20px;
	text-align: center;
	font-family: ${CJK_FONT};
	font-size: 31px;
	font-weight: 400;
	line-height: 40px;
	color: #fff;
`

const MotorBody = styled.div`
	display: flex;
	padding-left: 112px;
`

const MotorFields = styled.div`
	width: 249px;
	display: flex;
	flex-direction: column;
	align-items: flex-start;
`

const FieldLabel = styled.label`
	padding-left: 2px;
	font-family: ${CJK_FONT};
	font-size: 19px;
	line-height: 26px;
`

const MotorSelect = styled.div`
	position: relative;
	width: 143px;
	margin-top: 12px;
	margin-bottom: 37px;

	select {
		appearance: none;
		display: block;
		width: 100%;
		height: 30px;
		padding: 0 3px 2px;
		border: 1px solid;
		border-color: #cfcfcf #7c7c7c #7c7c7c #cfcfcf;
		border-radius: 0;
		background: #f9f9f9;
		color: #111;
		font-size: 16px;
		line-height: 24px;
	}

	span {
		position: absolute;
		right: 2px;
		top: 2px;
		width: 21px;
		height: 26px;
		border-right: 2px solid #a8a8a8;
		border-bottom: 1px solid #a8a8a8;
		background: linear-gradient(#e6e6e6, #c6c6c6);
		pointer-events: none;
	}

	span::after {
		content: '';
		display: block;
		width: 0;
		margin: 10px 0 0 2px;
		border: 7px solid transparent;
		border-top: 9px solid #000;
		border-bottom: 0;
	}
`

const Directions = styled.fieldset`
	display: flex;
	gap: 52px;
	margin: 0 0 32px;
	padding: 14px 0 0 7px;
	border: 0;

	legend {
		margin-left: -5px;
		padding: 0;
		font-family: ${CJK_FONT};
		font-size: 19px;
		line-height: 26px;
	}
`

const RadioLabel = styled.label`
	display: flex;
	align-items: center;
	gap: 4px;
	font-family: ${CJK_FONT};
	font-size: 17px;
	line-height: 26px;
	color: #000;

	input {
		appearance: none;
		width: 11px;
		height: 11px;
		border-radius: 50%;
		border: 1px solid #c5c8cd;
		background: radial-gradient(circle at 40% 40%, #fff, #c8cacd);
	}

	input:checked {
		border-color: #e8ecef;
		background: radial-gradient(circle at 50% 45%, #8fd0ea, #12426a 55%, #0e3355);
	}
`

const DistanceInput = styled.input`
	width: 115px;
	height: 30px;
	margin-top: 12px;
	padding: 0;
	border: 1px solid #fff;
	border-bottom-color: #8b8f99;
	background: #fff;
	text-align: center;
	font-size: 20px;
	color: #000;
`

const RoundButtons = styled.div`
	display: flex;
	flex-direction: column;
	gap: 31px;
	padding-top: 10px;
`

const RoundButton = styled.button`
	width: 120px;
	height: 120px;
	padding: 0;
	border: 1px solid #000;
	border-radius: 50%;
	background: #747a86;
	box-shadow: inset 2px 2px 0 #b4bac5, inset -2px -2px 0 #3c414d;
	color: #fff;
	font-size: 22px;
`

const ResultsPanel = styled.div`
	${panel}
	margin-left: 33px;
	padding: 56px 0 27px 74px;
	background: #828891;
`

const ResultsTable = styled.table`
	table-layout: fixed;
	width: 396px;
	border-collapse: collapse;
	font-family: ${CJK_FONT};
	font-size: 19px;
	line-height: 24px;

	tr {
		height: 43px;
	}

	thead tr {
		height: 42px;
	}

	th {
		width: 131px;
		padding: 0 43px 0 0;
		font-weight: 400;
		white-space: nowrap;
	}

	th:first-child {
		width: 134px;
	}

	tbody th {
		${rowHeading}
	}

	td {
		padding: 0;
	}
`

const tones = { good: '#66ff00', light: '#a6abb5', plain: '#828891' }

const ResultValue = styled.output`
	display: block;
	width: 88px;
	height: 28px;
	padding-right: 5px;
	border: 1px solid #656b76;
	box-shadow: 0 1px 0 #757b86;
	background: ${p => tones[p.$tone]};
	text-align: right;
	font-family: ${UI_FONT};
	font-size: 19px;
	line-height: 26px;
	color: #0a0c10;
`

const ScoreRow = styled.div`
	display: flex;
	align-items: center;
	gap: 12px;
	margin-top: 39px;
	padding-left: 93px;
	font-family: ${CJK_FONT};
	font-size: 28px;
	line-height: 36px;
	color: #000;
`

const Score = styled.output`
	width: 114px;
	height: 36px;
	padding-right: 6px;
	border: 1px solid #656b76;
	background: #a6abb5;
	text-align: right;
	font-family: ${UI_FONT};
	font-size: 26px;
	line-height: 34px;
`

const TaskbarWrapper = styled.footer`
	position: relative;
	display: flex;
	align-items: center;
	height: 48px;
	border-top: 1px solid #3f4c5c;
	box-shadow: inset 0 1px 0 #c3d0de;
	background: #8193ab;
	color: #fff;
`

const ImeBar = styled.div`
	position: absolute;
	right: 0;
	bottom: 100%;
	display: flex;
	align-items: center;
	gap: 8px;
	height: 27px;
	padding: 0 6px 0 5px;
	margin-bottom: 1px;
	background: #fdfdfd;
	box-shadow: 0 0 2px #5e6b7a;

	b {
		font-family: ${CJK_FONT};
		font-size: 16px;
		line-height: 24px;
		color: #1d84dc;
	}
`

const LaunchButton = styled.button`
	width: ${p => p.$width}px;
	display: flex;
	align-items: center;
	justify-content: center;
	padding: 0;
	border: 0;
	background: none;
`

const TaskButton = styled.button`
	display: flex;
	align-items: center;
	gap: ${p => (p.$active ? 8 : 10)}px;
	width: 159px;
	height: 46px;
	margin-left: 2px;
	padding: 0 10px;
	border: 1px solid #4d5b6d;
	border-radius: 3px;
	background: ${p =>
		p.$active
			? 'linear-gradient(160deg, #dfe5ec, #aebccb 55%, #bcc8d5)'
			: 'linear-gradient(160deg, #c3cdd9, #8f9fb3 50%, #9aa9bc)'};
	box-shadow: inset 0 0 0 1px rgba(255, 255, 255, 0.5);
	color: #fff;
	font-size: 15px;
	line-height: 22px;
	text-shadow: 0 0 2px #5e6b7a;
	white-space: nowrap;
`

const Tray = styled.div`
	display: flex;
	align-items: center;
	gap: 11px;
	margin-left: auto;
	padding: 1px 6px 0 0;
`

const Clock = styled.div`
	display: flex;
	flex-direction: column;
	align-items: center;
	width: 95px;
	padding-bottom: 2px;
	font-size: 15px;
	line-height: 22px;
`

const ShowDesktop = styled.button`
	width: 15px;
	height: 46px;
	padding: 0;
	border: 1px solid #4d5b6d;
	background: linear-gradient(120deg, #94a3b5, #56687c 50%, #8494a8);
`
